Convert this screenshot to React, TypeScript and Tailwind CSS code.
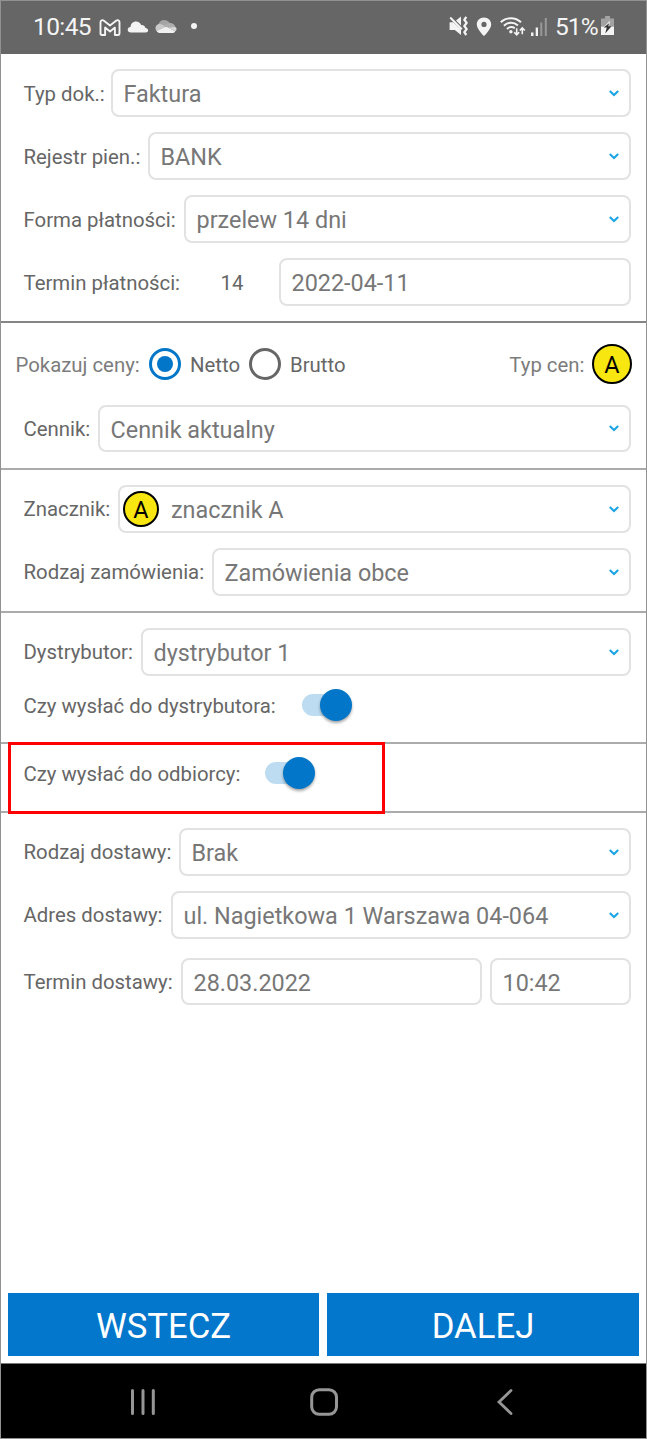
import type { ReactNode } from "react";

function Row({ className = "", children }: { className?: string; children: ReactNode }) {
  return <div className={`flex items-center pl-[22.5px] pr-[15px] ${className}`}>{children}</div>;
}

function Label({ className = "", children }: { className?: string; children: ReactNode }) {
  return (
    <span
      className={`shrink-0 whitespace-nowrap pt-[2px] text-[20.36px] leading-[24px] ${className}`}
    >
      {children}
    </span>
  );
}

function Field({
  className = "flex-1",
  arrow = true,
  marker,
  children,
}: {
  className?: string;
  arrow?: boolean;
  marker?: ReactNode;
  children: ReactNode;
}) {
  return (
    <div
      className={`flex h-[47.5px] min-w-0 items-center rounded-[8px] border-2 border-[#e2e2e2] bg-white text-[#777777] ${
        marker ? "pl-[3px]" : "pl-[10.5px]"
      } ${className}`}
    >
      {marker}
      <span className="flex-1 whitespace-nowrap pt-[3px] text-[23.4px] leading-[28px]">{children}</span>
      {arrow && (
        <svg className="mr-[10px] h-[8px] w-[10px] shrink-0" viewBox="0 0 10 8" fill="none">
          <path d="M0.800 2 5 6 9.200 2" stroke="#1ba5e6" strokeWidth="2.100" />
        </svg>
      )}
    </div>
  );
}

function Badge({ className }: { className: string }) {
  return (
    <span
      className={`flex shrink-0 items-center justify-center rounded-full border-2 border-black bg-[#f8e610] text-[23.4px] leading-none text-black ${className}`}
    >
      <span className="pt-[4px]">A</span>
    </span>
  );
}

function Switch() {
  return (
    <span className="flex h-[32px] w-[50px] items-center">
      <span className="flex h-[22px] w-[40px] items-center rounded-full bg-[#bddcf2]">
        <span className="ml-[18px] h-[32px] w-[32px] shrink-0 rounded-full bg-[#0276c8] shadow-[0_2px_3px_rgba(0,0,0,0.35)]" />
      </span>
    </span>
  );
}

function StatusBar() {
  return (
    <header className="flex h-[53px] shrink-0 items-center bg-[#666666] pl-[32px] text-[#f4f4f4]">
      <span className="w-[66px] whitespace-nowrap pb-[1px] text-[24.5px] leading-none tracking-[-0.6px]">10:45</span>
      <svg className="h-[18px] w-[22px] shrink-0" viewBox="0 0 22 18" fill="none" stroke="#f4f4f4" strokeWidth="1.9" strokeLinejoin="round">
        <path d="M1.500 14.600V3.200c0-2 2-2.600 3.400-1.500L11 6.600l6.100-4.900c1.400-1.100 3.400-.5 3.400 1.500v11.400c0 .9-.5 1.400-1.300 1.400h-3.300V8.600L11 12.500 6.100 8.600V16H2.800c-.8 0-1.300-.5-1.300-1.400Z" />
      </svg>
      <svg className="mb-[2px] ml-[6px] h-[14px] w-[22px] shrink-0" viewBox="0 0 22 14" fill="#f4f4f4">
        <path d="M4 12.500C1.700 12.500.7 11.300.7 9.800c0-1.500 1.200-2.600 2.800-2.700C3.700 3.700 5.900 1.500 9 1.500c2.500 0 4.300 1.300 5.100 3.400 2.600-.2 4.200 1.300 4.300 3.100 1.700.1 2.700 1 2.700 2.300 0 1.400-1 2.200-2.600 2.200Z" />
      </svg>
      <svg className="mb-[2px] ml-[6px] h-[16px] w-[22px] shrink-0" viewBox="0 0 22 16">
        <path d="M3.400 5.200C4.300 2.500 6.500.9 9.200.9c2.500 0 4.700 1.300 5.700 3.500L8.400 8Z" fill="#a4a4a4" />
        <path d="M3.400 5.100c1.500-.4 3-.1 4.500.8L14.200 9.500 3.200 13.300C1.600 12.500.5 11.200.5 9.300c0-2 1.300-3.500 2.900-4.200Z" fill="#c9c9c9" />
        <path d="M8.500 6.300 13.100 4.400c3.100-1.300 6.800.8 7.400 3.800L14.500 10Z" fill="#aeaeae" />
        <path d="m1.700 12.300 9.600-4.500 9 4.400c-.7 1.200-1.700 1.900-3.300 1.900H5c-1.300 0-2.500-.8-3.300-1.800Z" fill="#f0f0f0" />
        <path d="m13.400 8.800 7-.8c1.500 1.100 1.600 3-.1 4.300Z" fill="#d9d9d9" />
      </svg>
      <span className="mb-[3px] ml-[14px] h-[6px] w-[6px] rounded-full bg-[#f4f4f4]" />
      <span className="flex-1" />
      <svg className="mb-[3px] h-[20px] w-[20px] shrink-0" viewBox="0 0 20 20" fill="none">
        <path d="M.6 6.200h3.600L12 13.500V19L5.800 14H.6ZM7 4.600l5-4v8.800Z" fill="#f4f4f4" />
        <path d="m1.200 1.500 11.600 11.700" stroke="#f4f4f4" strokeWidth="2" />
        <path d="m17.300.8-2 3 2.400 3.100-2.400 3.100 2.400 3.100-2.400 3 2 2.900" stroke="#f4f4f4" strokeWidth="2.300" strokeLinejoin="round" />
      </svg>
      <svg className="mb-[2px] ml-[7.5px] h-[20px] w-[16px] shrink-0" viewBox="0 0 16 20" fill="#f4f4f4">
        <path fillRule="evenodd" d="M8 .5c4.200 0 7.200 3 7.200 6.900C15.200 12.200 8 19 8 19S.8 12.200.8 7.400C.8 3.500 3.800.5 8 .5Zm0 4.300a2.600 2.600 0 1 0 0 5.200 2.600 2.600 0 0 0 0-5.200Z" />
      </svg>
      <svg className="mb-[1px] ml-[8px] h-[20px] w-[26px] shrink-0" viewBox="0 0 26 20" fill="none" stroke="#f4f4f4" strokeWidth="2">
        <path d="M.8 5.300C6.400-.2 15.400-.2 21 5.300M3.900 8.700c3.900-3.900 10-4 14-.3M7 12c2.300-2.200 5.300-2.300 7.800-.8" />
        <circle cx="10.900" cy="14.800" r="1.700" fill="#f4f4f4" stroke="none" />
        <path d="M16.700 11.300v6.500m-2.500-2.500 2.500 2.600 2.500-2.600M22.300 17.300V11m-2.500 2.500 2.500-2.600 2.500 2.600" strokeWidth="1.600" />
      </svg>
      <svg className="mb-[2px] ml-[4px] h-[18px] w-[18px] shrink-0" viewBox="0 0 18 18">
        <path d="M1 14.500h2.500V18H1Z M5.700 9.500h2.300V18H5.700Z" fill="#f4f4f4" />
        <path d="M10.300 4.500h2V18h-2Z M14.800 0h2v18h-2Z" fill="#999999" />
      </svg>
      <span className="ml-[7px] w-[46px] whitespace-nowrap pb-[1px] text-[24.5px] leading-none tracking-[-0.9px]">51%</span>
      <svg className="mb-[3px] mr-[32px] h-[20px] w-[13px] shrink-0" viewBox="0 0 13 20">
        <path d="M4 0h5v2.500H4Z M0 2.500h13v8H0Z" fill="#a2a2a2" />
        <path d="M0 10.500h13V19H0Z" fill="#f4f4f4" />
        <path d="M9 4.500 2.500 11.500h5.200Z" fill="#f4f4f4" />
        <path d="M2.800 11.500h3L4.200 17.400l6.300-7.200H7.300l.7-3Z" fill="#333333" />
      </svg>
    </header>
  );
}

export default function App() {
  return (
    <div className="flex h-[1439px] w-[647px] flex-col overflow-hidden border border-[#929292] bg-white font-['Roboto',sans-serif] text-[#666666]">
      <StatusBar />
      <main className="flex flex-1 flex-col">
        <section className="flex h-[269px] flex-col gap-[15.5px] border-b-2 border-[#858585] pt-[15px]">
          <Row>
            <Label className="w-[87.5px]">Typ dok.:</Label>
            <Field>Faktura</Field>
          </Row>
          <Row>
            <Label className="w-[124.5px]">Rejestr pien.:</Label>
            <Field>BANK</Field>
          </Row>
          <Row>
            <Label className="w-[160.5px]">Forma płatności:</Label>
            <Field>przelew 14 dni</Field>
          </Row>
          <Row>
            <Label className="w-[197px]">Termin płatności:</Label>
            <Label className="w-[58.5px]">14</Label>
            <Field arrow={false}>2022-04-11</Field>
          </Row>
        </section>

        <section className="h-[147px] border-b-2 border-[#ababab] pt-[21px]">
          <div className="flex h-[40px] items-center pl-[14.5px] pr-[14px]">
            <Label className="w-[133.5px] text-[#7c7c7c]">Pokazuj ceny:</Label>
            <span className="flex h-[32px] w-[32px] shrink-0 items-center justify-center rounded-full border-[3px] border-[#0276c8]">
              <span className="h-[16px] w-[16px] rounded-full bg-[#0276c8]" />
            </span>
            <Label className="ml-[9px] w-[59px]">Netto</Label>
            <span className="h-[32px] w-[32px] shrink-0 rounded-full border-[3px] border-[#666666]" />
            <Label className="ml-[9px]">Brutto</Label>
            <Label className="ml-auto mr-[7.5px] text-[#7c7c7c]">Typ cen:</Label>
            <Badge className="h-[40px] w-[40px]" />
          </div>
          <Row className="mt-[20.5px]">
            <Label className="w-[74.5px]">Cennik:</Label>
            <Field>Cennik aktualny</Field>
          </Row>
        </section>

        <section className="flex h-[143px] flex-col gap-[15.5px] border-b-2 border-[#ababab] pt-[15px]">
          <Row>
            <Label className="mb-[1px] w-[94.5px]">Znacznik:</Label>
            <Field marker={<Badge className="mr-[12px] h-[36px] w-[36px]" />}>znacznik A</Field>
          </Row>
          <Row>
            <Label className="mb-[1px] w-[188.5px]">Rodzaj zamówienia:</Label>
            <Field>Zamówienia obce</Field>
          </Row>
        </section>

        <section className="h-[131px] border-b-2 border-[#ababab] pt-[15px]">
          <Row>
            <Label className="mb-[1px] w-[117.5px]">Dystrybutor:</Label>
            <Field>dystrybutor 1</Field>
          </Row>
          <Row className="mt-[13px]">
            <Label className="w-[278.5px]">Czy wysłać do dystrybutora:</Label>
            <Switch />
          </Row>
        </section>

        <section className="relative h-[69px] border-b-2 border-[#ababab] pt-[13px]">
          <Row>
            <Label className="w-[241.5px]">Czy wysłać do odbiorcy:</Label>
            <Switch />
          </Row>
          <div className="absolute left-[7px] top-[-2px] h-[72px] w-[377px] border-[3px] border-[#fe0000]" />
        </section>

        <section className="flex flex-col pt-[15px]">
          <Row>
            <Label className="mb-[1px] w-[155.5px]">Rodzaj dostawy:</Label>
            <Field>Brak</Field>
          </Row>
          <Row className="mt-[15.5px]">
            <Label className="mb-[1px] w-[147.5px]">Adres dostawy:</Label>
            <Field>ul. Nagietkowa 1 Warszawa 04-064</Field>
          </Row>
          <Row className="mt-[19px]">
            <Label className="w-[157.5px]">Termin dostawy:</Label>
            <Field arrow={false}>28.03.2022</Field>
            <Field arrow={false} className="ml-[8px] w-[141px]">10:42</Field>
          </Row>
        </section>

        <div className="mt-auto flex gap-[8px] px-[7px] pb-[7px]">
          <button className="h-[63px] w-[311px] bg-[#0277cc] pt-[3px] text-[34.7px] leading-none text-white">WSTECZ</button>
          <button className="h-[63px] flex-1 bg-[#0277cc] pt-[3px] text-[34.7px] leading-none text-white">DALEJ</button>
        </div>
      </main>

      <nav className="flex h-[75px] shrink-0 items-center border-t border-[#777777] bg-black pt-[2px]">
        <svg className="ml-[128.5px] h-[28px] w-[26px]" viewBox="0 0 26 28" stroke="#969696" strokeWidth="3" strokeLinecap="round">
          <path d="M2.500 2.500v23M13 2.500v23M23.300 2.500v23" />
        </svg>
        <svg className="ml-[154px] h-[28px] w-[28px]" viewBox="0 0 28 28" fill="none" stroke="#969696" strokeWidth="3">
          <rect x="1.700" y="1.700" width="24.800" height="24.600" rx="7.500" />
        </svg>
        <svg className="ml-[158.5px] h-[28px] w-[18px]" viewBox="0 0 18 28" fill="none" stroke="#969696" strokeWidth="2.800" strokeLinecap="round">
          <path d="M15 2.500 3 14l12 11.500" />
        </svg>
      </nav>
    </div>
  );
}
